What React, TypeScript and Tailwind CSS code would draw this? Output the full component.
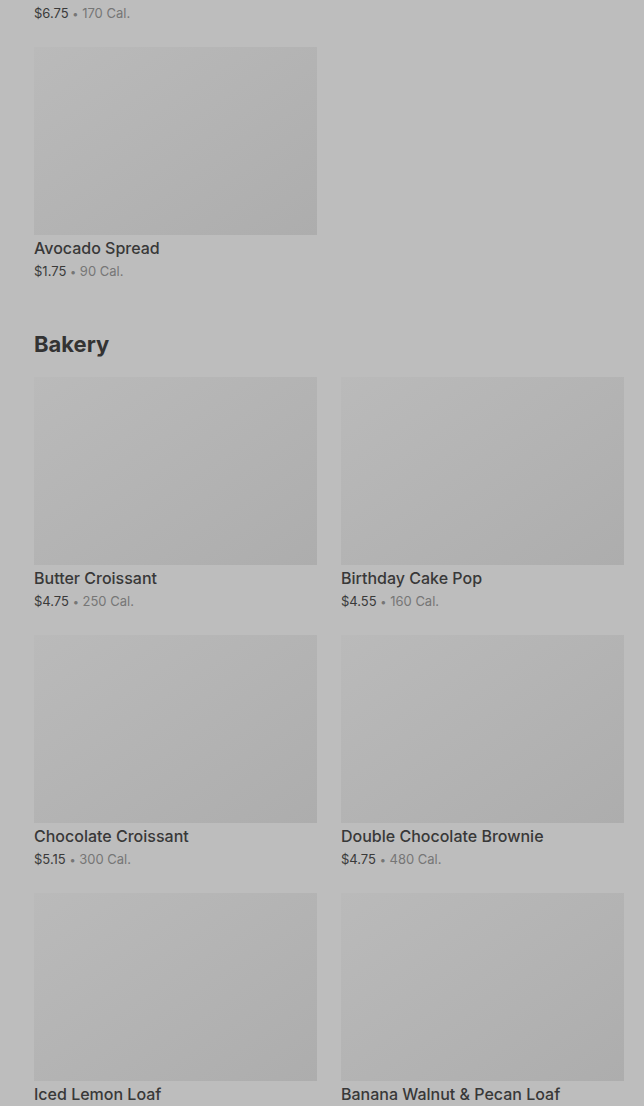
import React from "react";

interface Item {
  name: string;
  price: string;
  cal: string;
}

const bakery: Item[] = [
  { name: "Butter Croissant", price: "$4.75", cal: "250 Cal." },
  { name: "Birthday Cake Pop", price: "$4.55", cal: "160 Cal." },
  { name: "Chocolate Croissant", price: "$5.15", cal: "300 Cal." },
  { name: "Double Chocolate Brownie", price: "$4.75", cal: "480 Cal." },
  { name: "Iced Lemon Loaf", price: "$3.95", cal: "470 Cal." },
  { name: "Banana Walnut & Pecan Loaf", price: "$4.25", cal: "410 Cal." },
];

function PriceLine({ price, cal }: { price: string; cal: string }) {
  return (
    <div className="h-5 text-[13px] leading-5 whitespace-nowrap">
      <span className="text-[#3a3a3a]">{price}</span>
      <span className="text-[#767676]">
        {" "}
        <span className="text-[11px] leading-none">•</span> {cal}
      </span>
    </div>
  );
}

function ItemCard({ item }: { item: Item }) {
  return (
    <div className="flex flex-col">
      <div className="h-[188px] bg-gradient-to-br from-[#bababa] to-[#adadad]" />
      <div className="mt-[1px] text-base leading-6 font-medium text-[#383838] whitespace-nowrap">
        {item.name}
      </div>
      <div className="mt-[1px]">
        <PriceLine price={item.price} cal={item.cal} />
      </div>
    </div>
  );
}

export default function App() {
  return (
    <div
      className="min-h-[1106px] bg-[#bdbdbd] pl-[34px] pr-5 overflow-hidden"
      style={{ fontFamily: "Inter, 'Noto Sans', sans-serif" }}
    >
      <div className="pt-[3px]">
        <PriceLine price="$6.75" cal="170 Cal." />
      </div>

      <div className="mt-6 grid grid-cols-2 gap-x-6 gap-y-[24px]">
        <ItemCard item={{ name: "Avocado Spread", price: "$1.75", cal: "90 Cal." }} />
      </div>

      <h2 className="mt-[49px] text-[22px] leading-7 font-bold text-[#333333]">Bakery</h2>

      <div className="mt-[19px] grid grid-cols-2 gap-x-6 gap-y-[24px]">
        {bakery.map((item) => (
          <ItemCard key={item.name} item={item} />
        ))}
      </div>
    </div>
  );
}
